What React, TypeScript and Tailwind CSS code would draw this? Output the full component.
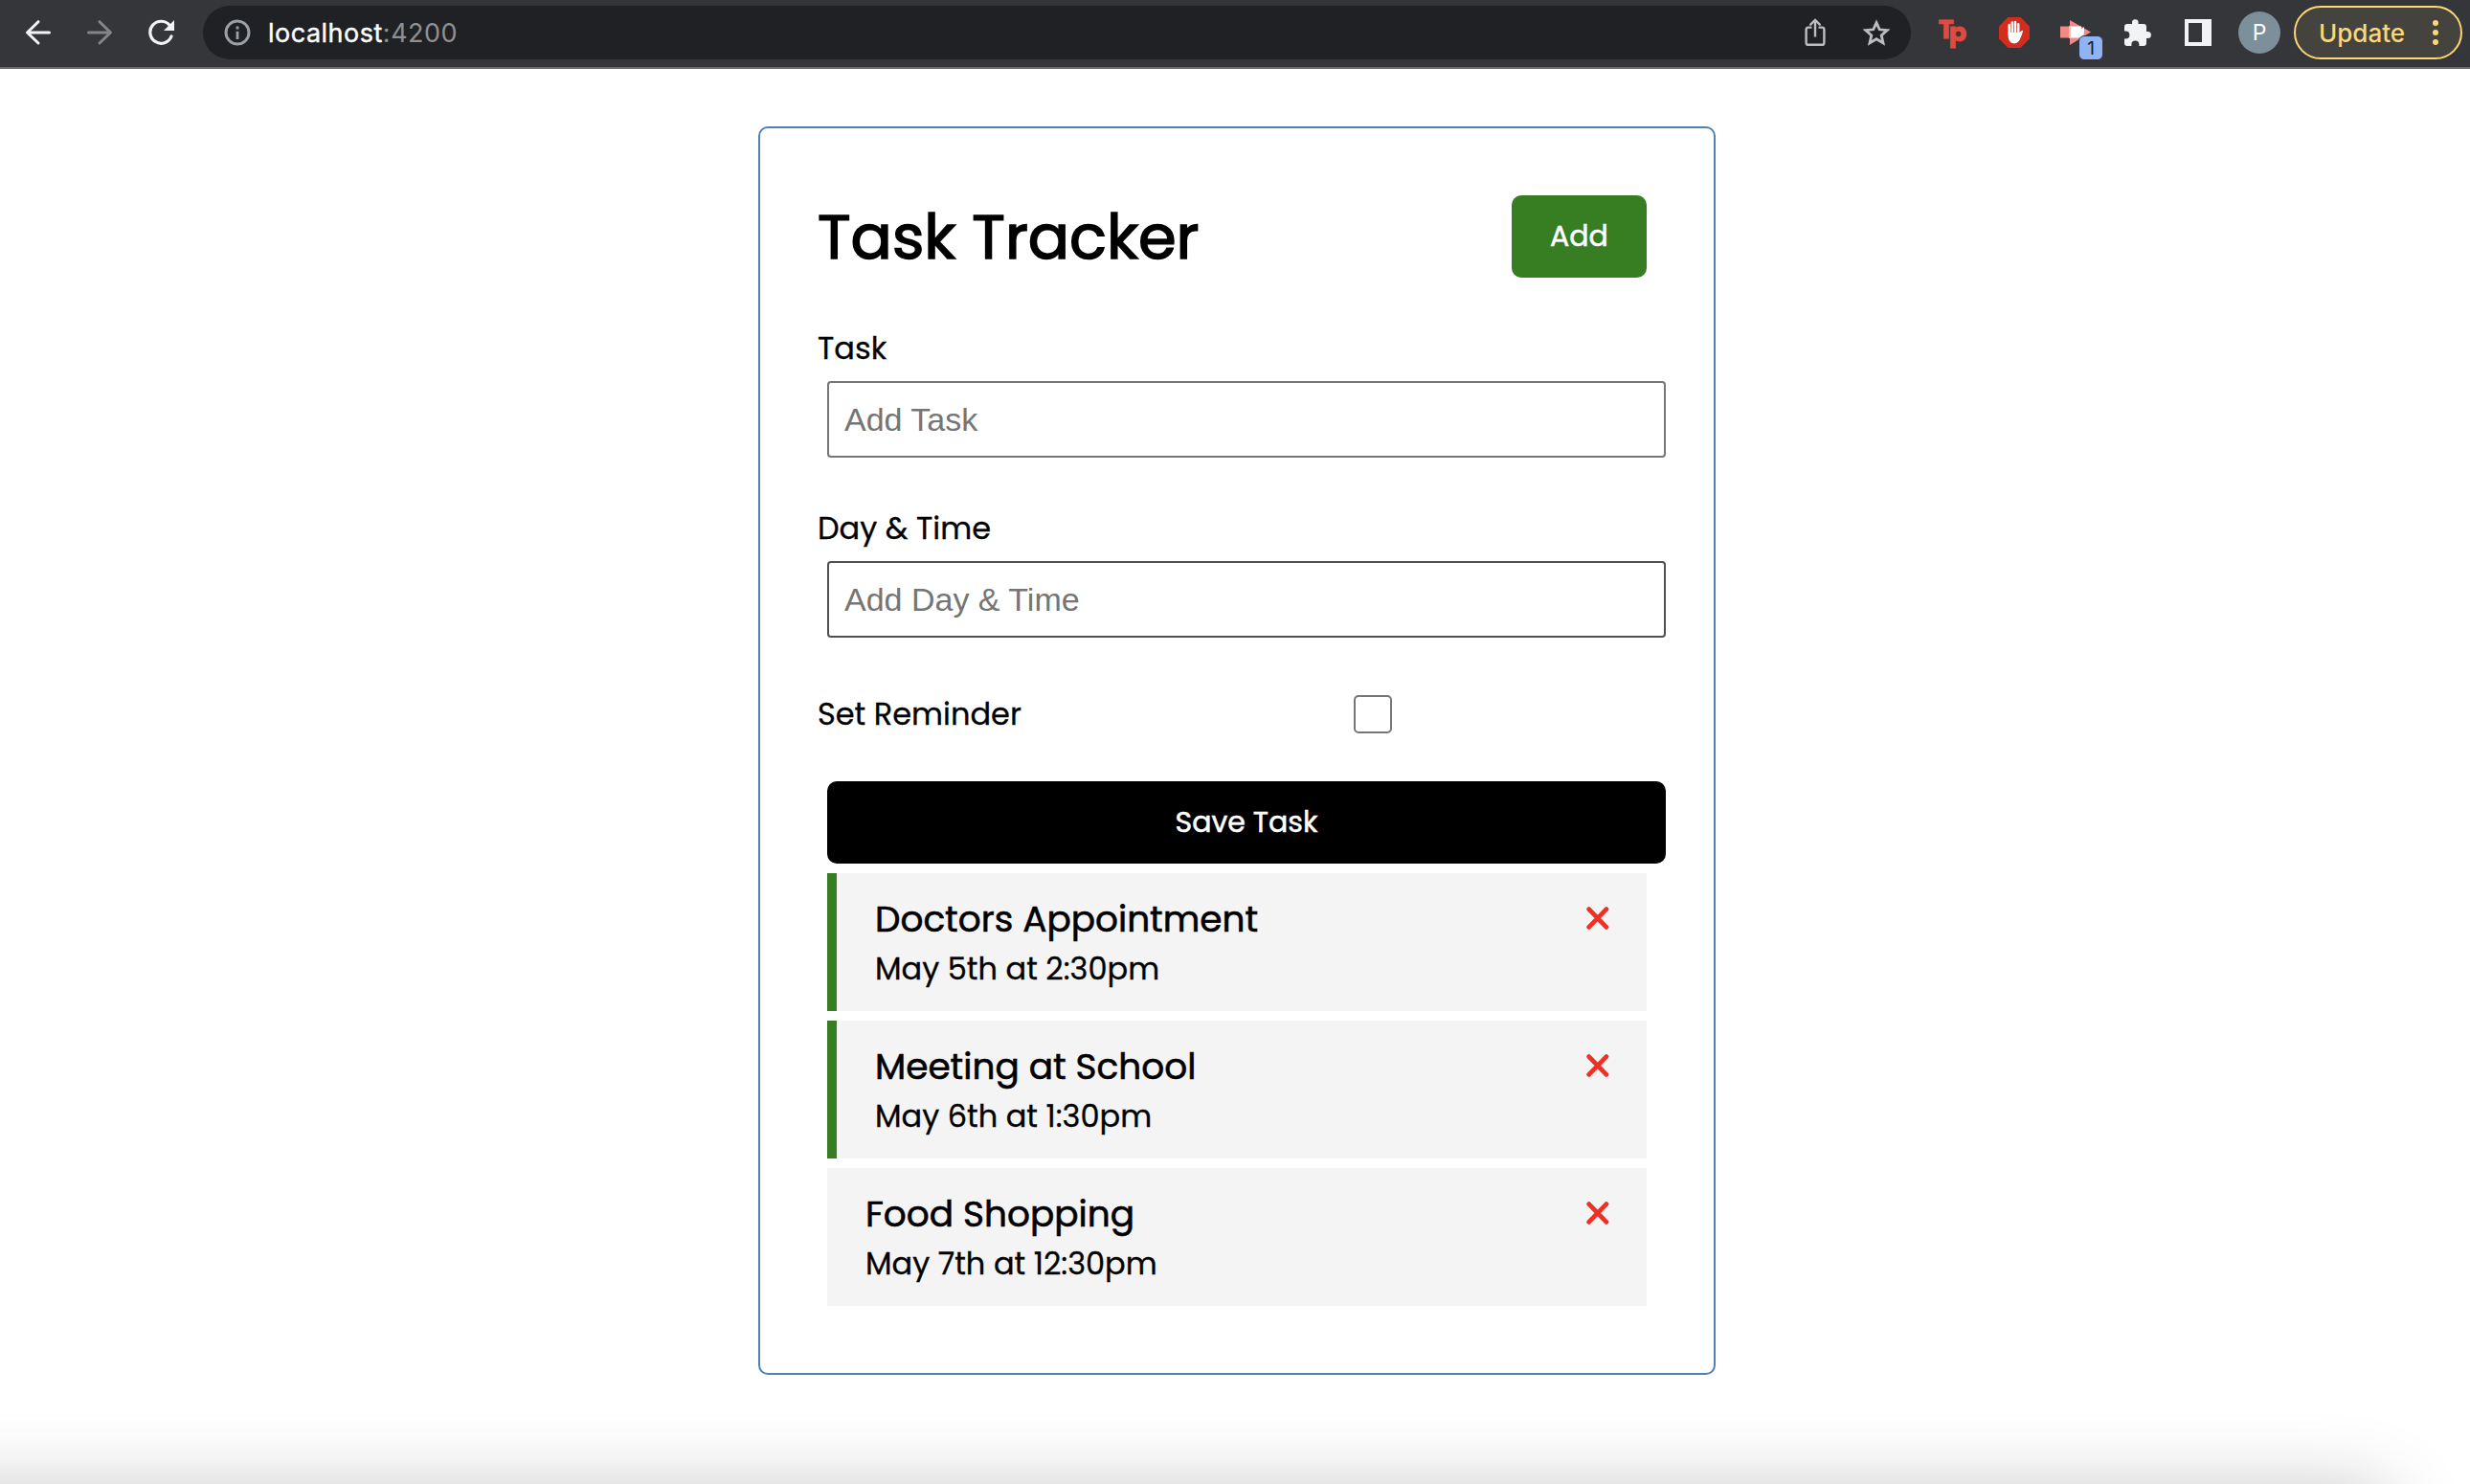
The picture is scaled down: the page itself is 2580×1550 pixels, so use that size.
import type { ReactNode } from "react";

const tasks = [
  { text: "Doctors Appointment", day: "May 5th at 2:30pm", reminder: true },
  { text: "Meeting at School", day: "May 6th at 1:30pm", reminder: true },
  { text: "Food Shopping", day: "May 7th at 12:30pm", reminder: false },
];

function BrowserBar() {
  return (
    <header className="flex h-[72px] items-center border-b-2 border-[#6b666b] bg-[#35363a] pb-[2px] pl-[26px] pr-2 font-['Inter',sans-serif]">
      <svg className="mr-[36px] h-7 w-7 shrink-0" viewBox="0 0 28 28" fill="none" stroke="#f1f3f4" strokeWidth="3" strokeLinecap="round" strokeLinejoin="round">
        <path d="M25.5 14H3M14 2.7L2.5 14L14 25" />
      </svg>
      <svg className="mr-[36px] h-7 w-7 shrink-0" viewBox="0 0 28 28" fill="none" stroke="#848588" strokeWidth="3" strokeLinecap="round" strokeLinejoin="round">
        <path d="M2.5 14H25M14 2.7L25.5 14L14 25" />
      </svg>
      <svg className="mr-[30px] h-7 w-7 shrink-0" viewBox="0 0 28 28" fill="none">
        <path d="M23.5 6.8A11.5 11.5 0 1 0 25 18" stroke="#f1f3f4" strokeWidth="3.2" strokeLinecap="round" />
        <path d="M28 1V12H17Z" fill="#f1f3f4" />
      </svg>
      <div className="flex h-14 w-[1784px] shrink-0 items-center rounded-full bg-[#202124] pl-[22px] pr-5">
        <svg className="mr-[18px] h-7 w-7 shrink-0" viewBox="0 0 28 28" fill="none">
          <circle cx="14" cy="14" r="12" stroke="#9aa0a6" strokeWidth="3" />
          <path d="M14 12.7V21M14 7.5V10.5" stroke="#9aa0a6" strokeWidth="2.8" />
        </svg>
        <span className="pt-px text-[27px] leading-9 tracking-[0.5px] text-white [-webkit-text-stroke:0.4px_white]">localhost</span>
        <span className="pt-px text-[27px] leading-9 tracking-[0.5px] text-[#8f9092]">:4200</span>
        <svg className="ml-auto h-[30px] w-[22px] shrink-0" viewBox="0 0 22 30" fill="none" stroke="#bcbdbe" strokeWidth="2.4">
          <path d="M7.5 9.6H4Q1.6 9.6 1.6 12V25.4Q1.6 27.8 4 27.8H18Q20.4 27.8 20.4 25.4V12Q20.4 9.6 18 9.6H14.5" />
          <path d="M11 19.5V3" />
          <path d="M6.2 6.6L11 1.9L15.8 6.6" strokeLinecap="round" />
        </svg>
        <svg className="ml-[37px] h-[30px] w-[32px] shrink-0" viewBox="0 0 32 30" fill="none" stroke="#bcbdbe" strokeWidth="2.8">
          <path d="M16 4.6L19.2 11.8L27.2 12.5L21.2 17.9L23 25.9L16 21.7L9 25.9L10.8 17.9L4.8 12.5L12.8 11.8Z" />
        </svg>
      </div>
      <svg className="ml-[29px] h-8 w-8 shrink-0 overflow-visible" viewBox="0 0 32 32">
        <text x="-0.2" y="22.2" dx="0 -5" dy="0 2.4" fill="#dd4b41" stroke="#dd4b41" strokeWidth="1" className="font-['Poppins',sans-serif] text-[27px] font-bold">
          Tp
        </text>
      </svg>
      <svg className="ml-[31px] h-8 w-8 shrink-0" viewBox="0 0 32 32">
        <path d="M9.4 0H22.6L32 9.4V22.6L22.6 32H9.4L0 22.6V9.4Z" fill="#d22d1e" />
        <path d="M10.7 8V18M13.8 5.6V18M17 5V18M20.2 7.2V18" stroke="#fff" strokeWidth="2.5" strokeLinecap="round" />
        <path d="M9.4 16H21.4L23.2 14.2Q24.8 13.2 25 14.6Q24.6 17 22.6 21.5Q20.6 27.2 16 27.4Q11 27.4 9.8 22Z" fill="#fff" />
      </svg>
      <div className="relative ml-[32px] h-[44px] w-[44px] shrink-0">
        <svg className="h-[44px] w-[34px]" viewBox="0 0 34 44">
          <path d="M0 15.5H10V9L32 21.5L10 35V27.5H0Z" fill="#f08a86" />
          <path d="M9 15.5H22V18.5L25 16V21L24 27.5H9Z" fill="#fff" />
          <path d="M9 15.5H11V27.5H9Z" fill="#f7c0be" />
        </svg>
        <span className="absolute left-[19px] top-[25px] flex h-[26px] w-[26px] items-center justify-center rounded-[6px] border border-[#35363a] bg-[#8fb3f5] text-[19px] leading-none text-[#202124]">1</span>
      </div>
      <svg className="ml-[22px] h-[30px] w-[30px] shrink-0" viewBox="0 0 30 30">
        <path d="M4 6H9V4.6A3.3 3.3 0 0 1 15.6 4.6V6H21Q24 6 24 9V14H25.4A3.5 3.5 0 0 1 25.4 21H24V26Q24 29 21 29H16.4V27.6A4 4 0 0 0 8.4 27.6V29H4Q1 29 1 26V21.4H2.4A4 4 0 0 0 2.4 13.4H1V9Q1 6 4 6Z" fill="#f1f3f4" />
      </svg>
      <div className="ml-[34px] flex h-7 w-7 shrink-0 items-center bg-[#f1f3f4] pl-1">
        <div className="h-5 w-[14px] bg-[#35363a]" />
      </div>
      <div className="ml-7 flex h-11 w-11 shrink-0 items-center justify-center rounded-full bg-[#7d8f9b] text-[23px] leading-none text-white">P</div>
      <div className="ml-[14px] flex h-14 w-44 shrink-0 items-center rounded-full border-2 border-[#fdd675] bg-[#45433e] pl-[24px]">
        <span className="pt-px text-[26px] font-medium leading-9 text-[#fdd675]">Update</span>
        <div className="ml-auto mr-[23px] flex flex-col gap-1">
          <i className="h-1.5 w-1.5 rounded-full bg-[#fdd675]" />
          <i className="h-1.5 w-1.5 rounded-full bg-[#fdd675]" />
          <i className="h-1.5 w-1.5 rounded-full bg-[#fdd675]" />
        </div>
      </div>
    </header>
  );
}

function Field({ label, placeholder, border }: { label: string; placeholder: string; border: string }) {
  return (
    <div className="pt-[49px]">
      <label className="block h-[49px] text-[32px] leading-[49px] [-webkit-text-stroke:0.3px_black]">{label}</label>
      <input
        placeholder={placeholder}
        className={`ml-[10px] mt-[10px] block h-20 w-[876px] rounded-[4px] border-2 bg-white px-4 font-['Liberation_Sans',Arial,sans-serif] text-[34px] placeholder:text-[#757575] ${border}`}
      />
    </div>
  );
}

function Button({ children, className }: { children: ReactNode; className: string }) {
  return (
    <button className={`flex h-[86px] items-center justify-center rounded-[10px] pb-px text-[30px] text-white [-webkit-text-stroke:0.5px_white] ${className}`}>
      {children}
    </button>
  );
}

function Cross() {
  return (
    <svg className="h-6 w-6" viewBox="0 0 24 24" stroke="#ee3124" strokeWidth="4.8" strokeLinecap="round">
      <path d="M2.7 2.6L20.9 21.4M20.9 2.6L2.7 21.4" />
    </svg>
  );
}

export default function App() {
  return (
    <div className="relative h-[1550px] w-[2580px] overflow-hidden bg-white">
      <BrowserBar />
      <main className="ml-[792px] mt-[60px] h-[1304px] w-[1000px] rounded-[10px] border-2 border-[#4f82b4] pl-[60px] pt-[70px] font-['Poppins',sans-serif] text-black">
        <div className="flex h-[86px] w-[866px] items-center justify-between">
          <h1 className="mt-px text-[64px] leading-[80px] [-webkit-text-stroke:1.6px_black]">Task Tracker</h1>
          <Button className="w-[141px] bg-[#377e22]">Add</Button>
        </div>
        <form>
          <Field label="Task" placeholder="Add Task" border="border-[#767676]" />
          <Field label="Day & Time" placeholder="Add Day & Time" border="border-[#4f4f4f]" />
          <div className="mt-[56px] flex h-12 items-center">
            <label className="w-[560px] text-[32px] leading-[48px] [-webkit-text-stroke:0.3px_black]">Set Reminder</label>
            <input type="checkbox" className="h-10 w-10 appearance-none rounded-[5px] border-2 border-[#767676] bg-white" />
          </div>
          <Button className="ml-[10px] mt-[46px] w-[876px] bg-black">Save Task</Button>
        </form>
        <div className="ml-[10px] mt-[10px] flex w-[856px] flex-col gap-[10px]">
          {tasks.map((t) => (
            <div
              key={t.text}
              className={`flex h-36 justify-between bg-[#f4f4f4] pl-10 pr-[39px] pt-[21px] ${t.reminder ? "border-l-[10px] border-[#377e22]" : ""}`}
            >
              <div>
                <h3 className="text-[37.44px] leading-[55px] [-webkit-text-stroke:0.6px_black]">{t.text}</h3>
                <p className="text-[32px] leading-[48px] [-webkit-text-stroke:0.3px_black]">{t.day}</p>
              </div>
              <div className="pt-[14px]">
                <Cross />
              </div>
            </div>
          ))}
        </div>
      </main>
      <div className="pointer-events-none absolute -left-[200px] top-[1556px] h-[400px] w-[2695px] rounded-[20px] shadow-[0_0_80px_rgba(0,0,0,0.23)]" />
    </div>
  );
}
